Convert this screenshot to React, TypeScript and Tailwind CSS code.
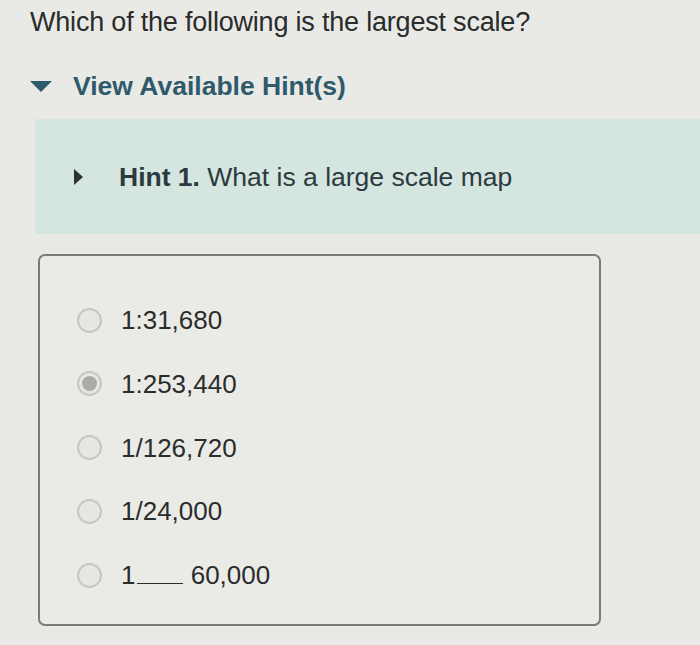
import React from "react";

const options = ["1:31,680", "1:253,440", "1/126,720", "1/24,000", "1___60,000"];

function Radio({ checked }: { checked?: boolean }) {
  return (
    <span className="flex h-[25px] w-[25px] items-center justify-center rounded-full border-2 border-[#c4c6c2] bg-[#e6e7e3]">
      {checked && <span className="h-[15px] w-[15px] rounded-full bg-[#a9aba8]" />}
    </span>
  );
}

export default function App() {
  return (
    <div
      className="h-[645px] w-[700px] overflow-hidden bg-[#e9eae6] text-[#2a2b2b]"
      style={{ fontFamily: '"Liberation Sans", Arial, sans-serif' }}
    >
      <div className="pl-[30px] pt-[6px] text-[27px] leading-[32px] tracking-[-0.2px]">
        Which of the following is the largest scale?
      </div>
      <div className="mt-[33px] flex items-center pl-[30px]">
        <svg width="22" height="14" viewBox="0 0 22 14" className="mr-[21px]">
          <polygon points="0,2 22,2 11,13" fill="#2f5b6c" />
        </svg>
        <span className="text-[26.5px] font-bold leading-[30px] text-[#2f5a6b]">
          View Available Hint(s)
        </span>
      </div>
      <div className="ml-[35px] mt-[18px] flex h-[115px] items-center bg-[#d5e5df] pl-[38px]">
        <svg width="10" height="16" viewBox="0 0 10 16" className="mr-[36px]">
          <polygon points="1,0 10,8 1,16" fill="#2b3135" />
        </svg>
        <span className="text-[26.5px] leading-[30px] text-[#2c3a40]">
          <b>Hint 1.</b> What is a large scale map
        </span>
      </div>
      <div className="ml-[38px] mt-[20px] flex h-[372px] w-[563px] flex-col rounded-[7px] border-2 border-[#7a7c79] bg-[#eaebe7] pl-[37px] pt-[49px]">
        {options.map((o, i) => (
          <div key={o} className="flex h-[64px] items-start">
            <div className="flex items-center gap-[19px]">
              <Radio checked={i === 1} />
              <span className="text-[26px] leading-[30px] text-[#2b2c2c]">
                {i === 4 ? (
                  <>
                    1<span className="ml-[2px] inline-block w-[46px] border-b-[1.5px] border-[#2b2c2c] align-baseline" /> 60,000
                  </>
                ) : (
                  o
                )}
              </span>
            </div>
          </div>
        ))}
      </div>
    </div>
  );
}
